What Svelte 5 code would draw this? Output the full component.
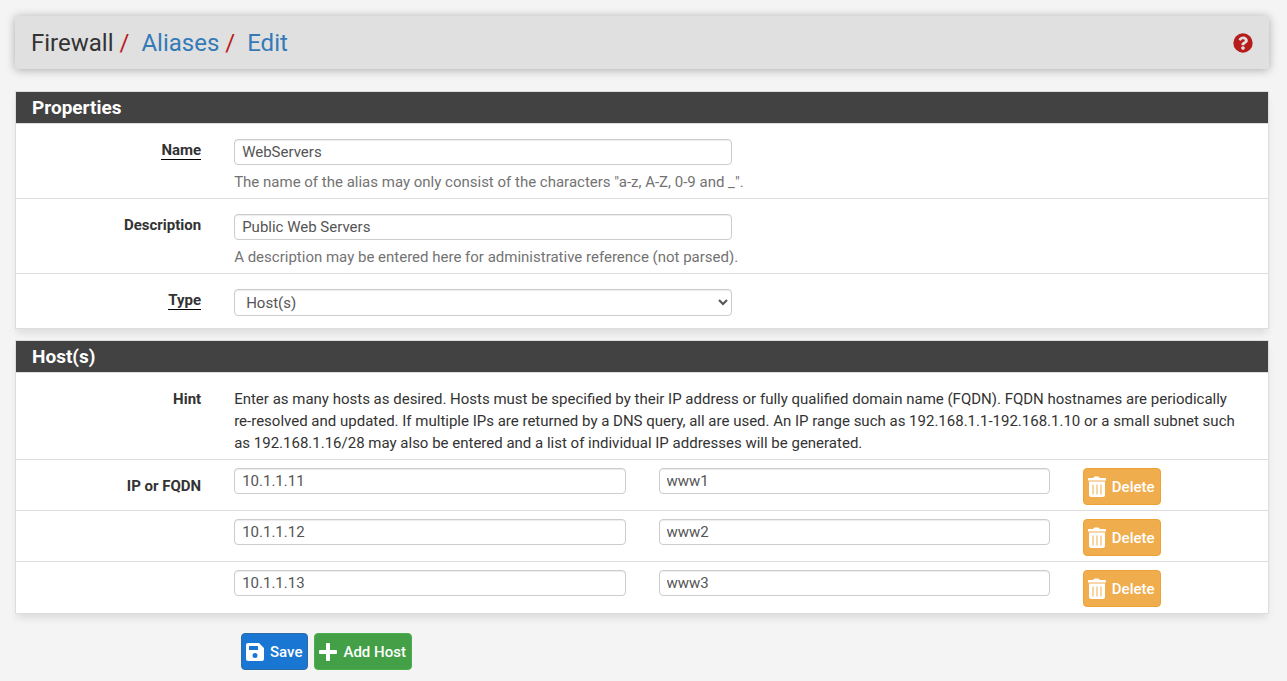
<script lang="ts">
  let name = 'WebServers';
  let description = 'Public Web Servers';
  let type = 'host';

  let hosts = [
    { address: '10.1.1.11', detail: 'www1' },
    { address: '10.1.1.12', detail: 'www2' },
    { address: '10.1.1.13', detail: 'www3' }
  ];

  const addHost = () => {
    hosts = [...hosts, { address: '', detail: '' }];
  };

  const deleteHost = (index: number) => {
    hosts = hosts.filter((_, i) => i !== index);
  };
</script>

<div class="page">
  <header class="header">
    <nav class="breadcrumb">
      <span>Firewall</span>
      <span class="slash">/</span>
      <a href="#aliases">Aliases</a>
      <span class="slash">/</span>
      <a href="#edit">Edit</a>
    </nav>
    <a class="help-link" href="#help" aria-label="Help">
      <svg viewBox="0 0 512 512" width="20" height="20">
        <circle cx="256" cy="256" r="248" fill="#b71c1c" />
        <path fill="#e0e0e0" d="M262.700 90c-54.500 0-89.300 23-116.500 63.800-3.500 5.300-2.400 12.400 2.700 16.300l34.700 26.300c5.200 3.900 12.600 3 16.700-2.100 17.900-22.700 30.100-35.800 57.300-35.800 20.400 0 45.700 13.100 45.700 33 0 15-12.400 22.700-32.500 34C247.100 238.500 216 254.900 216 296v4c0 6.600 5.400 12 12 12h56c6.600 0 12-5.400 12-12v-1.300c0-28.500 83.200-29.600 83.200-106.700 0-58-60.200-102-116.500-102zM256 338c-25.400 0-46 20.600-46 46s20.600 46 46 46 46-20.600 46-46-20.600-46-46-46z" />
      </svg>
    </a>
  </header>

  <form on:submit|preventDefault>
    <section class="panel">
      <h2>Properties</h2>
      <div class="row">
        <label class="label required" for="name"><span>Name</span></label>
        <div class="field">
          <input id="name" type="text" bind:value={name} />
        </div>
        <p class="help">The name of the alias may only consist of the characters "a-z, A-Z, 0-9 and _".</p>
      </div>
      <div class="row">
        <label class="label" for="descr"><span>Description</span></label>
        <div class="field">
          <input id="descr" type="text" bind:value={description} />
        </div>
        <p class="help">A description may be entered here for administrative reference (not parsed).</p>
      </div>
      <div class="row">
        <label class="label required" for="type"><span>Type</span></label>
        <div class="field">
          <select id="type" bind:value={type}>
            <option value="host">Host(s)</option>
            <option value="network">Network(s)</option>
            <option value="port">Port(s)</option>
          </select>
        </div>
      </div>
    </section>

    <section class="panel">
      <h2>Host(s)</h2>
      <div class="row">
        <span class="label">Hint</span>
        <p class="hint-text">
          Enter as many hosts as desired. Hosts must be specified by their IP address or fully qualified domain name (FQDN). FQDN hostnames are periodically <span class="nowrap">re-resolved</span> and updated. If multiple IPs are returned by a DNS query, all are used. An IP range such as 192.168.1.1-192.168.1.10 or a small subnet such <span class="nowrap">as 192.168.1.16/28</span> may also be entered and a list of individual IP addresses will be generated.
        </p>
      </div>
      {#each hosts as host, i}
        <div class="row host">
          <label class="label" for="address{i}">{i === 0 ? 'IP or FQDN' : ''}</label>
          <input class="cell" id="address{i}" type="text" bind:value={host.address} />
          <input class="cell" type="text" aria-label="Host description" bind:value={host.detail} />
          <button type="button" class="btn delete" on:click={() => deleteHost(i)}>
            <svg viewBox="0 0 20 22" width="20" height="22" fill="currentColor">
              <path fill-rule="evenodd" d="M1 2h5L7.500 0.500h4L13 2h5q1 0 1 1V4.500H1V3zM2 5.500h16V18.500q0 2.500-2.500 2.500h-11Q2 21 2 18.500zM5.500 8.500v10h1V8.500zM9.500 8.500v10h1V8.500zM13.500 8.500v10h1V8.500z" />
            </svg>
            Delete
          </button>
        </div>
      {/each}
    </section>

    <div class="actions">
      <button type="submit" class="btn save">
        <svg viewBox="0 0 20 20" width="20" height="20" fill="currentColor">
          <path fill-rule="evenodd" d="M3 1h11l5 5v11q0 2-2 2H3q-2 0-2-2V3q0-2 2-2zM4 4v4h9V4zM10 11a2.500 2.500 0 1 0 0 5a2.500 2.500 0 1 0 0-5z" />
        </svg>
        Save
      </button>
      <button type="button" class="btn add" on:click={addHost}>
        <svg viewBox="0 0 20 20" width="20" height="20" fill="currentColor">
          <path d="M9 1h2q1 0 1 1v6h6q1 0 1 1v2q0 1-1 1h-6v6q0 1-1 1H9q-1 0-1-1v-6H2q-1 0-1-1V9q0-1 1-1h6V2q0-1 1-1z" />
        </svg>
        Add Host
      </button>
    </div>
  </form>
</div>

<style>
  :global(body) {
    margin: 0;
    background: #f4f4f4;
    color: #333;
    font-family: Roboto, 'Liberation Sans', sans-serif;
    font-size: 15px;
    line-height: 22px;
  }

  .page {
    padding: 16px 18px 0 15px;
  }

  .header {
    display: flex;
    align-items: center;
    justify-content: space-between;
    height: 53px;
    margin-bottom: 22px;
    padding: 0 16px;
    border-radius: 2px;
    background: #e0e0e0;
    box-shadow: 0 1px 10px rgba(0, 0, 0, 0.3);
  }

  .breadcrumb {
    display: flex;
    gap: 12px;
    font-size: 24px;
    line-height: 32px;
  }

  .breadcrumb a {
    color: #337ab7;
    text-decoration: none;
  }

  .slash {
    margin-left: -6px;
    color: #b71c1c;
  }

  .help-link {
    display: flex;
  }

  .panel {
    margin-bottom: 11px;
    border: 1px solid #ddd;
    background: #fff;
    box-shadow: 0 6px 8px -2px rgba(0, 0, 0, 0.1);
  }

  h2 {
    margin: 0;
    padding: 0 16px;
    background: #424242;
    color: #fff;
    font-size: 19px;
    font-weight: 700;
    line-height: 31px;
  }

  .row {
    display: grid;
    grid-template-columns: repeat(12, minmax(0, 1fr));
    column-gap: 33px;
    padding: 15px 6px 5px 6px;
    border-top: 1px solid #ddd;
  }

  .row:last-child {
    padding-bottom: 12px;
  }

  .label {
    grid-column: span 2;
    font-weight: 700;
    text-align: right;
  }

  .required span {
    display: inline-block;
    border-bottom: 1px solid #000;
    line-height: 17px;
  }

  .field {
    grid-column: span 5;
  }

  input,
  select {
    display: block;
    box-sizing: border-box;
    width: 100%;
    height: 26px;
    padding: 0 7px;
    border: 1px solid #ccc;
    border-radius: 4px;
    background: #fff;
    box-shadow: inset 0 1px 1px rgba(0, 0, 0, 0.075);
    color: #555;
    font: inherit;
  }

  select {
    height: 27px;
  }

  .help {
    grid-column: 3 / -1;
    margin: 6px 0 0;
    color: #737373;
  }

  .hint-text {
    grid-column: span 10;
    margin: 0;
  }

  .nowrap {
    white-space: nowrap;
  }

  .host {
    padding-top: 8px;
  }

  .host:last-child {
    padding-bottom: 6px;
  }

  .host .label {
    line-height: 36px;
  }

  .cell {
    grid-column: span 4;
  }

  .btn {
    display: inline-flex;
    align-items: center;
    justify-self: start;
    gap: 5px;
    height: 37px;
    padding: 0 5px 0 3px;
    border: 1px solid;
    border-radius: 4px;
    color: #fff;
    font: inherit;
    font-weight: 500;
    white-space: nowrap;
    cursor: pointer;
  }

  .delete {
    grid-column: span 2;
    border-color: #eea236;
    background: #f0ad4e;
  }

  .actions {
    display: flex;
    gap: 6px;
    padding: 8px 0 11px 226px;
  }

  .save {
    border-color: #2e6da4;
    background: #1976d2;
  }

  .add {
    border-color: #4cae4c;
    background: #43a047;
  }
</style>
